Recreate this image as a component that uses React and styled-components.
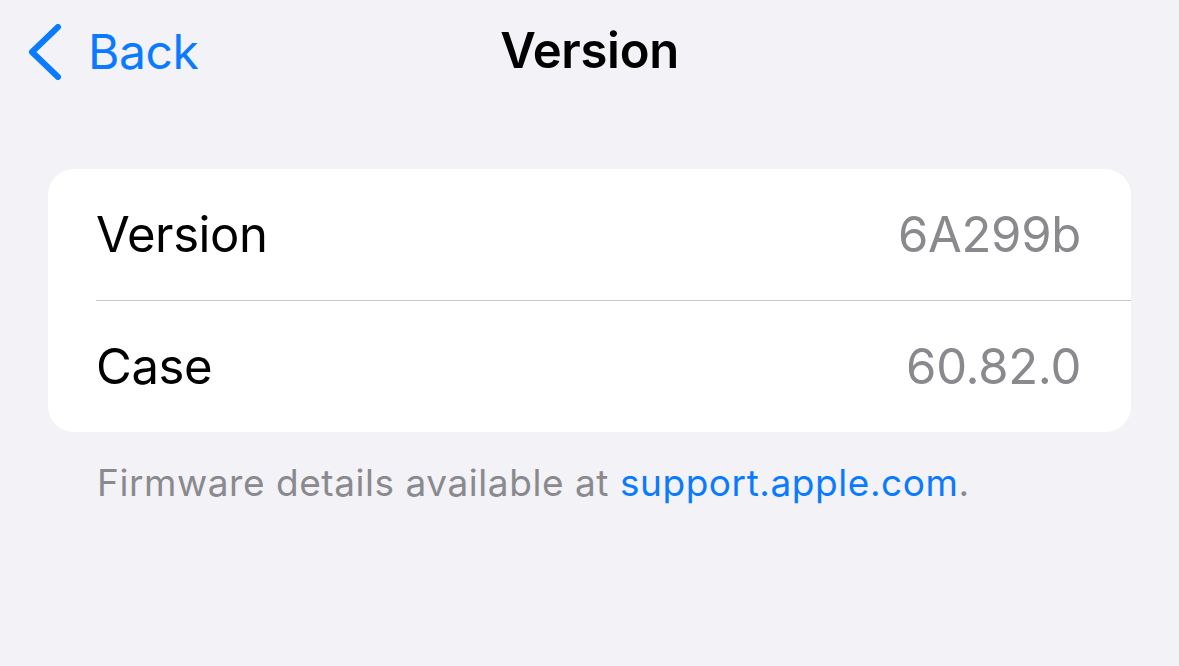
import React from 'react'
import styled, { createGlobalStyle } from 'styled-components'

const GlobalStyle = createGlobalStyle`
  html, body {
    margin: 0;
    padding: 0;
    background: #f2f2f7;
    font-family: Inter, "Noto Sans", "Liberation Sans", sans-serif;
    -webkit-font-smoothing: antialiased;
  }
`

const color = {
  blue: '#0a7aff',
  label: '#000000',
  secondary: '#8a8a8e',
  separator: '#c8c8cc',
  card: '#ffffff'
}

const Screen = styled.div`
  width: 1179px;
  height: 666px;
  background: #f2f2f7;
  display: flex;
  flex-direction: column;
`

const NavBar = styled.header`
  position: relative;
  height: 100px;
  display: flex;
  align-items: center;
  justify-content: center;
`

const BackButton = styled.button`
  position: absolute;
  left: 28px;
  top: 22px;
  display: flex;
  align-items: center;
  gap: 26px;
  background: none;
  border: 0;
  padding: 0;
  color: ${color.blue};
  font-family: inherit;
  font-size: 48px;
  letter-spacing: -0.4px;
  cursor: pointer;
`

const Title = styled.h1`
  margin: 0;
  font-size: 49px;
  font-weight: 600;
  letter-spacing: -0.3px;
  color: ${color.label};
`

const Content = styled.main`
  padding: 69px 48px 0;
  display: flex;
  flex-direction: column;
`

const Card = styled.section`
  background: ${color.card};
  border-radius: 26px;
  overflow: hidden;
`

const Row = styled.div`
  height: 131px;
  display: flex;
  align-items: center;
  justify-content: space-between;
  margin-left: 48px;
  padding-right: 50px;
  border-top: ${p => (p.first ? 'none' : `1px solid ${color.separator}`)};
`

const Label = styled.span`
  font-size: 49px;
  color: ${color.label};
  letter-spacing: -0.4px;
`

const Value = styled.span`
  font-size: 49px;
  color: ${color.secondary};
  letter-spacing: -0.3px;
`

const Footer = styled.p`
  margin: 28px 0 0 49px;
  font-size: 37px;
  color: ${color.secondary};
  letter-spacing: 0.55px;
`

const FooterLink = styled.a`
  color: ${color.blue};
  text-decoration: none;
`

const Chevron = () => (
  <svg width='34' height='56' viewBox='0 0 34 56' fill='none'>
    <path
      d='M30 3 L4 28 L30 53'
      stroke={color.blue}
      strokeWidth='6'
      strokeLinecap='round'
      strokeLinejoin='round'
    />
  </svg>
)

const rows = [
  { label: 'Version', value: '6A299b' },
  { label: 'Case', value: '60.82.0' }
]

export default function App () {
  return (
    <Screen>
      <GlobalStyle />
      <NavBar>
        <BackButton>
          <Chevron />
          <span>Back</span>
        </BackButton>
        <Title>Version</Title>
      </NavBar>
      <Content>
        <Card>
          {rows.map((row, i) => (
            <Row key={row.label} first={i === 0}>
              <Label>{row.label}</Label>
              <Value>{row.value}</Value>
            </Row>
          ))}
        </Card>
        <Footer>
          Firmware details available at{' '}
          <FooterLink href='#'>support.apple.com</FooterLink>.
        </Footer>
      </Content>
    </Screen>
  )
}
